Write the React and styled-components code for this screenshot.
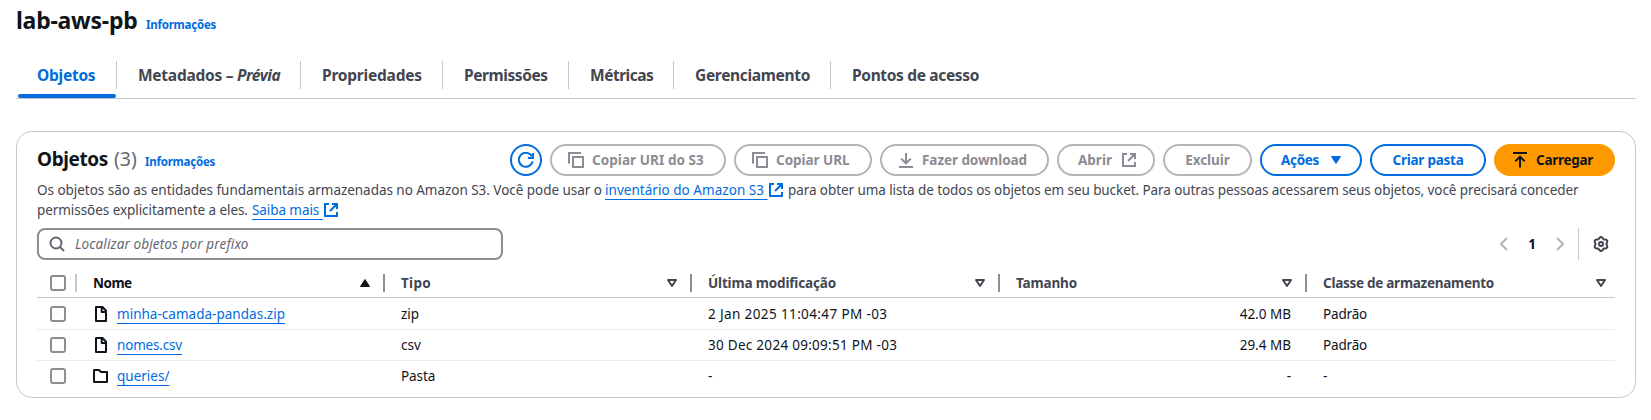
import React from "react";
import styled, { createGlobalStyle, css } from "styled-components";

const c = {
  blue: "#006ce0",
  text: "#0f141a",
  body: "#424650",
  muted: "#656871",
  disabled: "#8c8c94",
  disabledBorder: "#b4b4bb",
  divider: "#c6c6cd",
  row: "#ebebf0",
  orange: "#ff9900",
};

const GlobalStyle = createGlobalStyle`
  *, *::before, *::after { box-sizing: border-box; }
  body {
    margin: 0;
    background: #fff;
    color: ${c.text};
    font: 400 13.5px/20px "Noto Sans", "Open Sans", sans-serif;
  }
`;

/* Text run with its own tracking and, where needed, a fixed width */
const T = styled.span`
  flex: none;
  width: ${(p) => (p.$w ? `${p.$w}px` : "auto")};
  letter-spacing: ${(p) => p.$ls || 0}px;
  white-space: pre;
`;

const Page = styled.main`
  padding: 4px 15px 0 16px;
`;

const TitleRow = styled.header`
  display: flex;
  align-items: baseline;
  gap: 8px;
  height: 34px;
`;

const Title = styled.h1`
  margin: 0;
  width: 122px;
  font-size: 23px;
  line-height: 32px;
  font-weight: 700;
`;

const InfoLink = styled.a`
  color: ${c.blue};
  font-size: 11.5px;
  line-height: 16px;
  font-weight: 700;
`;

const Tabs = styled.nav`
  display: flex;
  align-items: flex-start;
  margin-top: 23px;
  height: 38px;
  border-bottom: 1px solid ${c.divider};
`;

const Tab = styled.div`
  display: flex;
  flex-direction: column;
  flex: none;
  width: ${(p) => p.$w}px;
  height: 37px;
  font-size: 15.5px;
  font-weight: 700;
  color: ${(p) => (p.$active ? c.blue : c.body)};
`;

const TabLabel = styled.div`
  height: 28px;
  line-height: 28px;
  padding-left: 21px;
  white-space: nowrap;
  border-right: ${(p) => (p.$last ? "none" : `1px solid ${c.divider}`)};
`;

const ActiveBar = styled.div`
  height: 4px;
  margin: 5px 1px 0 2px;
  border-radius: 2px;
  background: ${c.blue};
`;

const Card = styled.section`
  margin-top: 32px;
  height: 267px;
  padding: 12px 20px 0;
  border: 1px solid ${c.divider};
  border-radius: 16px;
`;

const CardHeader = styled.div`
  display: flex;
  justify-content: space-between;
  align-items: flex-start;
  height: 36px;
`;

const Heading = styled.div`
  display: flex;
  align-items: baseline;
`;

const H2 = styled.h2`
  margin: 0;
  width: 77px;
  font-size: 19px;
  line-height: 30px;
  font-weight: 700;
`;

const Counter = styled.span`
  width: 31px;
  font-size: 19.5px;
  color: ${c.muted};
`;

const Actions = styled.div`
  display: flex;
  gap: 8px;
`;

const Button = styled.button`
  display: flex;
  align-items: center;
  justify-content: center;
  gap: 8px;
  flex: none;
  width: ${(p) => p.$w}px;
  height: 32px;
  padding: 0;
  border: 2px solid ${c.blue};
  border-radius: 16px;
  background: #fff;
  color: ${c.blue};
  font: inherit;
  font-weight: 700;
  ${(p) =>
    p.$slot === "start" &&
    css`
      justify-content: flex-start;
      padding-left: 16px;
    `}
  ${(p) =>
    p.$slot === "end" &&
    css`
      justify-content: space-between;
      padding: 0 16px 0 19px;
    `}
  ${(p) =>
    p.$kind === "disabled" &&
    css`
      border-color: ${c.disabledBorder};
      color: ${c.disabled};
    `}
  ${(p) =>
    p.$kind === "primary" &&
    css`
      border-color: ${c.orange};
      background: ${c.orange};
      color: ${c.text};
    `}
`;

const Description = styled.p`
  margin: 0;
  height: 40px;
  color: ${c.body};
`;

const Line = styled.span`
  display: flex;
  align-items: center;
  height: 20px;
`;

const Link = styled.a`
  flex: none;
  width: ${(p) => (p.$w ? `${p.$w}px` : "auto")};
  color: ${c.blue};
  letter-spacing: ${(p) => p.$ls || 0}px;
  white-space: pre;
  text-decoration: underline;
  text-decoration-thickness: 1px;
  text-decoration-skip-ink: none;
  text-underline-offset: 4px;
`;

const InlineIcon = styled.span`
  display: flex;
  margin-right: 4px;
  color: ${c.blue};
`;

const Tools = styled.div`
  display: flex;
  align-items: center;
  margin-top: 8px;
  height: 32px;
`;

const Search = styled.div`
  display: flex;
  align-items: center;
  gap: 10px;
  width: 466px;
  height: 32px;
  padding-left: 10px;
  border: 2px solid ${c.disabled};
  border-radius: 8px;
  color: ${c.muted};
  font-style: italic;
`;

const Pagination = styled.div`
  display: flex;
  align-items: center;
  justify-content: space-between;
  width: 72px;
  margin: 0 10px 0 auto;
  color: ${c.disabledBorder};
`;

const PageNumber = styled.span`
  color: ${c.text};
  font-weight: 700;
`;

const Preferences = styled.div`
  display: flex;
  align-items: center;
  height: 32px;
  width: 37px;
  padding-left: 14px;
  border-left: 1px solid ${c.divider};
  color: ${c.body};
`;

const Table = styled.div`
  margin-top: 8px;
`;

const Row = styled.div`
  display: grid;
  grid-template-columns: 40px 308px 307px 308px 307px 1fr;
  align-items: center;
  height: ${(p) => p.$h}px;
  border-bottom: ${(p) => (p.$last ? "none" : `1px solid ${p.$head ? c.divider : c.row}`)};
`;

const CheckCell = styled.div`
  display: flex;
  align-items: center;
  justify-content: space-between;
  height: 18px;
  padding-left: 13px;
  border-right: ${(p) => (p.$head ? `2px solid ${c.divider}` : "none")};
`;

const Checkbox = styled.span`
  width: 16px;
  height: 16px;
  border: 2px solid ${c.disabled};
  border-radius: 3px;
`;

const HeadCell = styled.div`
  display: flex;
  align-items: center;
  justify-content: space-between;
  height: 18px;
  padding: 0 ${(p) => (p.$last ? 6 : 10)}px 0 16px;
  font-weight: 700;
  color: ${(p) => (p.$sorted ? c.text : c.body)};
  border-right: ${(p) => (p.$last ? "none" : `2px solid ${c.disabled}`)};
`;

const Cell = styled.div`
  display: flex;
  align-items: center;
  gap: 8px;
  padding: 0 16px;
  justify-content: ${(p) => (p.$right ? "flex-end" : "flex-start")};
`;

const Svg = styled.svg`
  display: block;
  flex: none;
  fill: none;
  stroke: currentColor;
  stroke-width: 2;
`;

const gearPath = (() => {
  const pts = [];
  for (let i = 0; i < 72; i++) {
    const a = (i / 72) * Math.PI * 2;
    const r = 6.25 + 0.8 * Math.cos(6 * (a + Math.PI / 2));
    pts.push(`${(8 + r * Math.cos(a)).toFixed(2)} ${(8 + r * Math.sin(a)).toFixed(2)}`);
  }
  return `M${pts.join("L")}Z`;
})();

const shapes = {
  refresh: <path d="M14.6 9.6A7 7 0 1 1 13.9 4.3M15 1v5h-5" />,
  copy: <path d="M15 5H5v10h10V5ZM13 1H1v10.5" />,
  download: <path d="M8 1v10M3.2 6.6 8 11.3l4.8-4.7M1 15h14" />,
  upload: <path d="M8 15.5V5M3.2 9.4 8 4.7l4.8 4.7M1 1h14" />,
  external: <path d="M9 2h5v5M7 9l7-7M14 10v4H2V2h4" />,
  search: (
    <>
      <circle cx="7" cy="7" r="5.5" />
      <path d="m10.8 10.8 4.2 4.2" />
    </>
  ),
  file: <path strokeLinejoin="round" d="M9.5 1H3v14h10V4.8L9.5 1ZM8.7 1.5V6H13" />,
  folder: <path strokeLinejoin="round" d="M1 14h13V4H8L6 2H1v12Z" />,
  prev: <path d="M11 2 5 8l6 6" />,
  next: <path d="m5 2 6 6-6 6" />,
  caret: <path strokeWidth="1" strokeLinejoin="round" fill="currentColor" d="M3.5 4.5h9L8 11.5Z" />,
  sortUp: <path strokeWidth="1" strokeLinejoin="round" fill="currentColor" d="M3.5 11.5h9L8 4.5Z" />,
  sortDown: <path strokeLinejoin="round" d="M4 5h8l-4 6Z" />,
  gear: (
    <>
      <path d={gearPath} />
      <circle cx="8" cy="8" r="2" />
    </>
  ),
};

const Icon = ({ name }) => (
  <Svg width="16" height="16" viewBox="0 0 16 16" aria-hidden="true">
    {shapes[name]}
  </Svg>
);

const tabs = [
  { label: "Objetos", w: 101, ls: -0.25, active: true },
  { label: "Metadados – ", em: "Prévia", w: 184, ls: -0.25 },
  { label: "Propriedades", w: 142, ls: -0.22 },
  { label: "Permissões", w: 126, ls: -0.42 },
  { label: "Métricas", w: 105, ls: -0.48 },
  { label: "Gerenciamento", w: 157, ls: -0.32 },
  { label: "Pontos de acesso", w: 170, ls: -0.34 },
];

const actions = [
  { icon: "refresh", w: 32 },
  { icon: "copy", label: "Copiar URI do S3", w: 176, ls: 0.07, kind: "disabled" },
  { icon: "copy", label: "Copiar URL", w: 138, ls: -0.04, kind: "disabled" },
  { icon: "download", label: "Fazer download", w: 169, ls: -0.06, kind: "disabled" },
  { end: "external", label: "Abrir", w: 98, ls: 0, kind: "disabled" },
  { label: "Excluir", w: 89, ls: -0.06, kind: "disabled" },
  { end: "caret", label: "Ações", w: 102, ls: -0.3 },
  { label: "Criar pasta", w: 116, ls: -0.24 },
  { icon: "upload", label: "Carregar", w: 121, ls: -0.29, kind: "primary" },
];

const slotOf = (a) => (a.end ? "end" : a.icon && a.label ? "start" : undefined);

const columns = [
  { label: "Nome", ls: -0.5, sorted: true },
  { label: "Tipo", ls: 0.3 },
  { label: "Última modificação", ls: -0.16 },
  { label: "Tamanho", ls: -0.14 },
  { label: "Classe de armazenamento", ls: -0.27 },
];

const rows = [
  { icon: "file", name: ["minha-camada-pandas.zip", 0.02], cells: [["zip", 0], ["2 Jan 2025 11:04:47 PM -03", 0.38], ["42.0 MB", 0], ["Padrão", -0.18]] },
  { icon: "file", name: ["nomes.csv", -0.18], cells: [["csv", 0], ["30 Dec 2024 09:09:51 PM -03", 0.28], ["29.4 MB", 0], ["Padrão", -0.18]] },
  { icon: "folder", name: ["queries/", 0], cells: [["Pasta", -0.1], ["-", 0], ["-", 0], ["-", 0]] },
];
const rowHeights = [32, 31, 30];

export default function App() {
  return (
    <>
      <GlobalStyle />
      <Page>
        <TitleRow>
          <Title><T $ls={-0.25}>lab-aws-pb</T></Title>
          <InfoLink><T $ls={-0.23}>Informações</T></InfoLink>
        </TitleRow>

        <Tabs>
          {tabs.map((t, i) => (
            <Tab key={t.label} $w={t.w} $active={t.active}>
              <TabLabel $last={i === tabs.length - 1}>
                <T $ls={t.ls}>{t.label}</T>
                {t.em && <T as="em" $ls={-0.45}>{t.em}</T>}
              </TabLabel>
              {t.active && <ActiveBar />}
            </Tab>
          ))}
        </Tabs>

        <Card>
          <CardHeader>
            <Heading>
              <H2><T $ls={-0.4}>Objetos</T></H2>
              <Counter>(3)</Counter>
              <InfoLink><T $ls={-0.23}>Informações</T></InfoLink>
            </Heading>
            <Actions>
              {actions.map((a) => (
                <Button key={a.label || a.icon} $w={a.w} $kind={a.kind} $slot={slotOf(a)}>
                  {a.icon && <Icon name={a.icon} />}
                  {a.label && <T $ls={a.ls}>{a.label}</T>}
                  {a.end && <Icon name={a.end} />}
                </Button>
              ))}
            </Actions>
          </CardHeader>

          <Description>
            <Line>
              <T $w={568} $ls={-0.035}>Os objetos são as entidades fundamentais armazenadas no Amazon S3. Você pode usar o </T>
              <Link $w={163} $ls={0.04}>inventário do Amazon S3 </Link>
              <InlineIcon><Icon name="external" /></InlineIcon>
              <T $ls={-0.082}>para obter uma lista de todos os objetos em seu bucket. Para outras pessoas acessarem seus objetos, você precisará conceder</T>
            </Line>
            <Line>
              <T $w={215} $ls={-0.06}>permissões explicitamente a eles. </T>
              <Link $w={71} $ls={-0.08}>Saiba mais </Link>
              <InlineIcon><Icon name="external" /></InlineIcon>
            </Line>
          </Description>

          <Tools>
            <Search>
              <Icon name="search" />
              <T $ls={0.12}>Localizar objetos por prefixo</T>
            </Search>
            <Pagination>
              <Icon name="prev" />
              <PageNumber>1</PageNumber>
              <Icon name="next" />
            </Pagination>
            <Preferences><Icon name="gear" /></Preferences>
          </Tools>

          <Table>
            <Row $h={30} $head>
              <CheckCell $head><Checkbox /></CheckCell>
              {columns.map((col, i) => (
                <HeadCell key={col.label} $sorted={col.sorted} $last={i === columns.length - 1}>
                  <T $ls={col.ls}>{col.label}</T>
                  <Icon name={col.sorted ? "sortUp" : "sortDown"} />
                </HeadCell>
              ))}
            </Row>
            {rows.map((r, i) => (
              <Row key={r.name[0]} $h={rowHeights[i]} $last={i === rows.length - 1}>
                <CheckCell><Checkbox /></CheckCell>
                <Cell>
                  <Icon name={r.icon} />
                  <Link $ls={r.name[1]}>{r.name[0]}</Link>
                </Cell>
                {r.cells.map(([text, ls], j) => (
                  <Cell key={j} $right={j === 2}>
                    <T $ls={ls}>{text}</T>
                  </Cell>
                ))}
              </Row>
            ))}
          </Table>
        </Card>
      </Page>
    </>
  );
}
